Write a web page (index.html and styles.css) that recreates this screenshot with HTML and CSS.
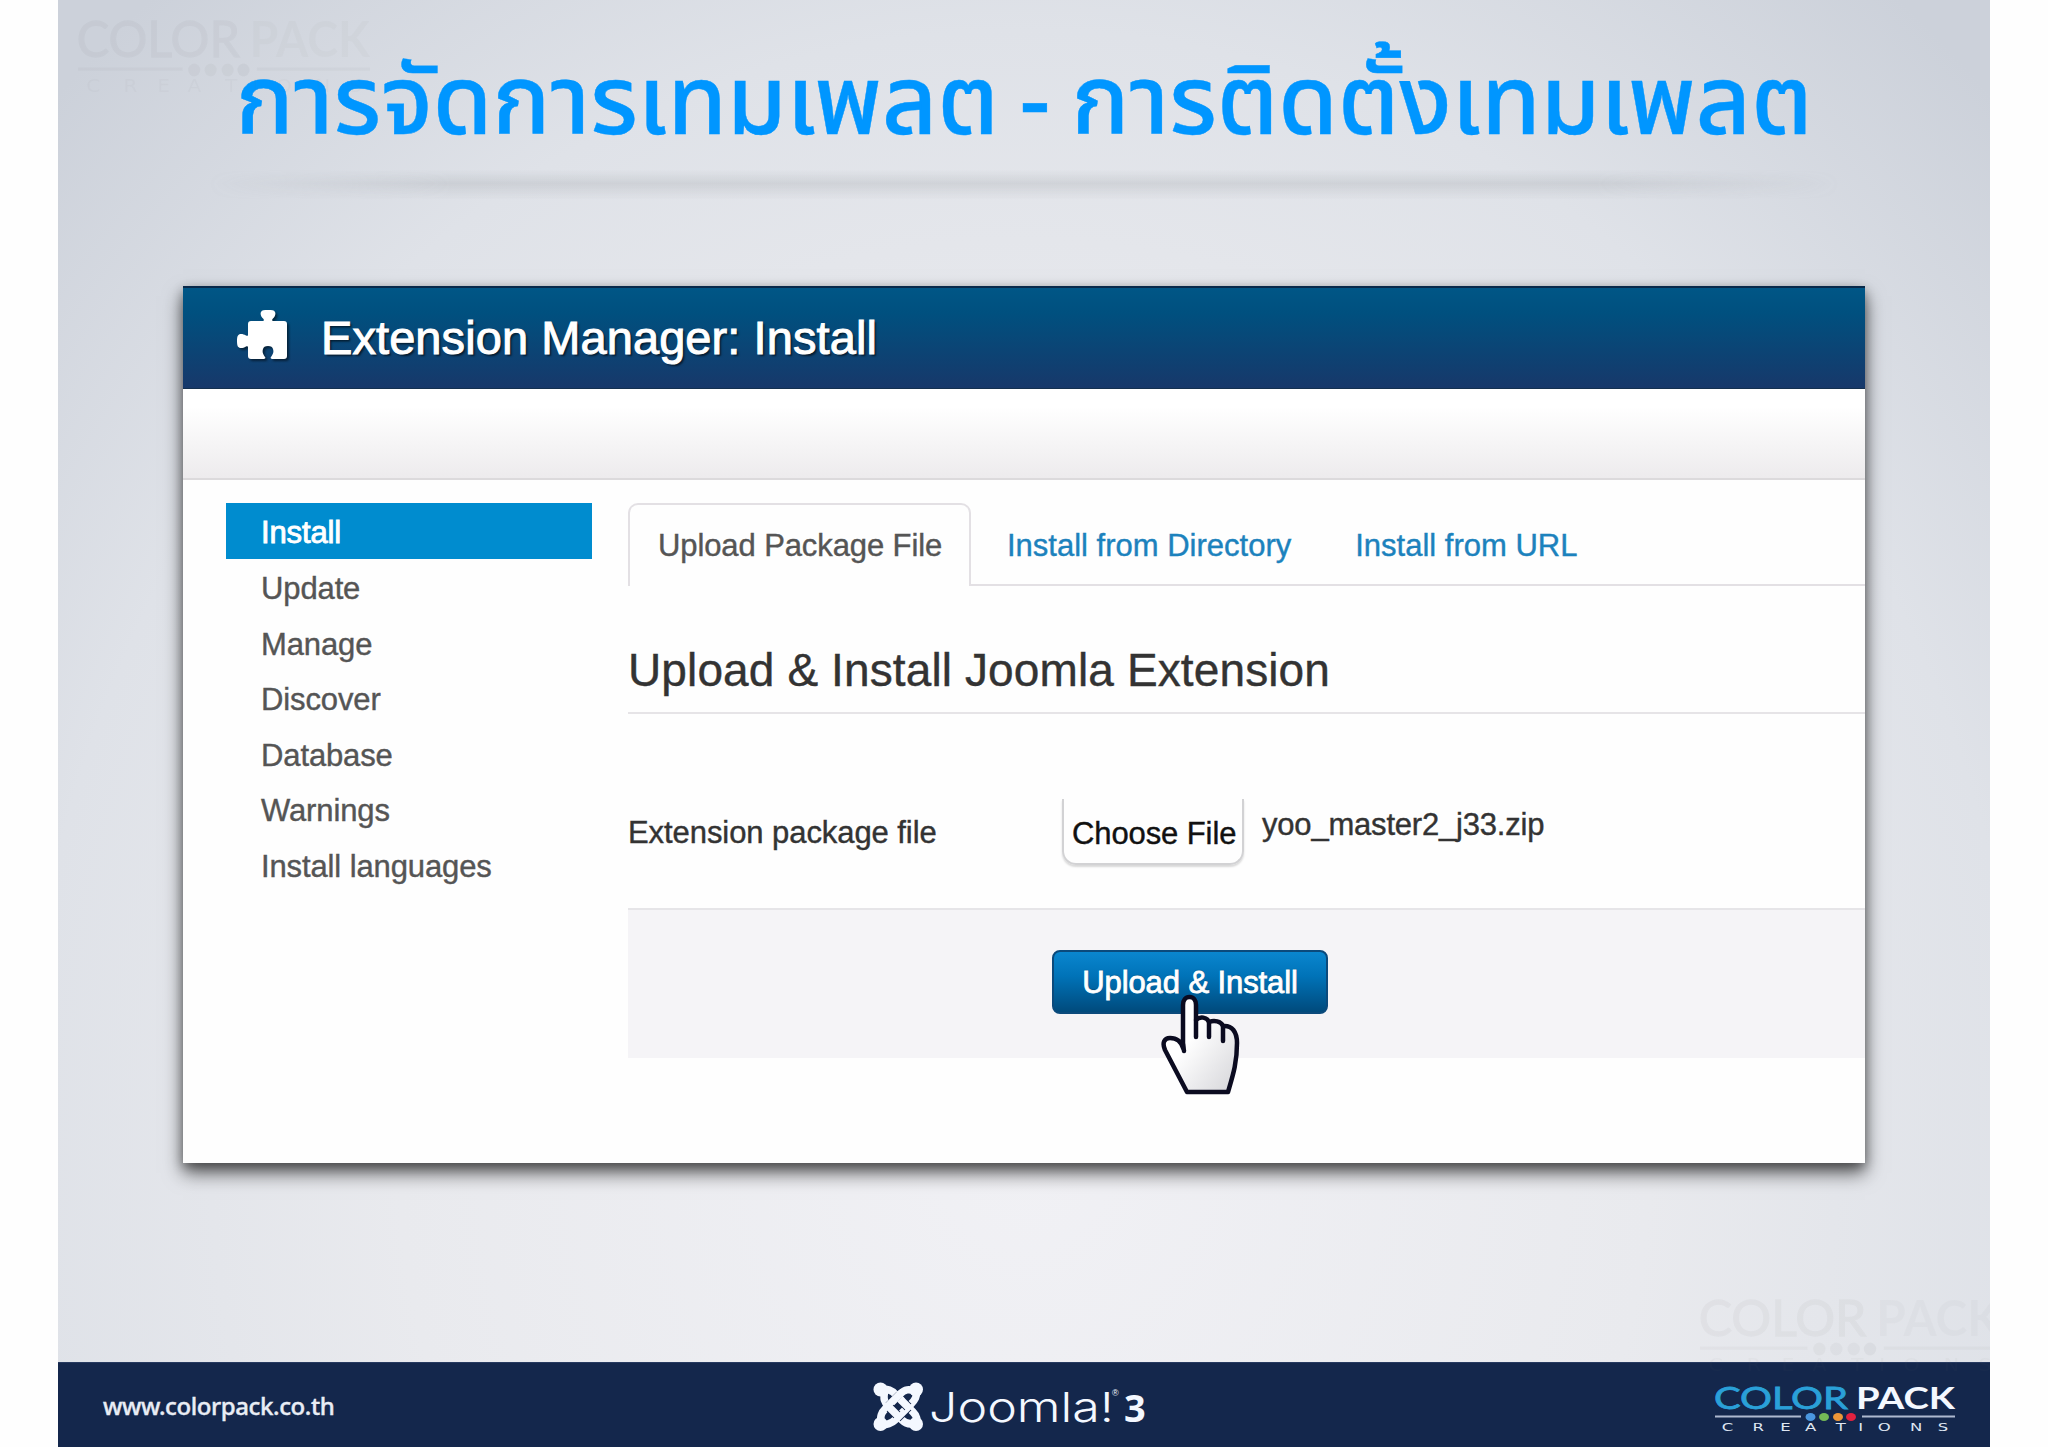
FILE: index.html
```
<!DOCTYPE html>
<html lang="th">
<head>
    <meta charset="UTF-8">
    <meta name="viewport" content="width=device-width, initial-scale=1.0">
    <title>การจัดการเทมเพลต - การติดตั้งเทมเพลต</title>
    <link rel="stylesheet" href="styles.css">
</head>
<body>
    <div class="slide">
        <svg class="watermark watermark-top" viewBox="0 0 240 50" preserveAspectRatio="none"><use href="#colorpack"/></svg>
        <svg class="watermark watermark-bottom" viewBox="0 0 240 50" preserveAspectRatio="none"><use href="#colorpack"/></svg>

        <h1 class="slide-title">การจัดการเทมเพลต - การติดตั้งเทมเพลต</h1>
        <div class="title-shadow"></div>

        <div class="window">
            <div class="header">
                <svg class="puzzle" width="50" height="49" viewBox="0 0 50 49">
                    <path fill="#fff" d="M14 11h12c1 0 1-1 .5-2C24 7 23 4 24 2c1-2 3-2 7-2s6 0 7 2c1 2 0 5-2.500 7-.5 1-.5 2 .5 2h11c2 0 3 1 3 3v32c0 2-1 3-3 3H35c-1 0-2-1-1-2 2-3 3-5 2-8-.5-2-2-3-5-3s-4.500 1-5 3c-1 3 0 5 2 8 1 1 0 2-1 2H14c-2 0-3-1-3-3V37c0-1-1-1-2-.5C7 38 6 38 4 38c-3 0-4-2-4-7s1-7 4-7c2 0 3 .5 5 1.500 1 .5 2 .5 2-.5V14c0-2 1-3 3-3z"/>
                </svg>
                <span>Extension Manager: Install</span>
            </div>
            <div class="toolbar"></div>

            <div class="content">
                <ul class="sidebar">
                    <li class="active">Install</li>
                    <li>Update</li>
                    <li>Manage</li>
                    <li>Discover</li>
                    <li>Database</li>
                    <li>Warnings</li>
                    <li>Install languages</li>
                </ul>

                <div class="main">
                    <div class="tabs">
                        <a class="tab active">Upload Package File</a>
                        <a class="tab tab-directory">Install from Directory</a>
                        <a class="tab tab-url">Install from URL</a>
                    </div>
                    <h2 class="legend">Upload &amp; Install Joomla Extension</h2>
                    <div class="control-group">
                        <label class="label">Extension package file</label>
                        <span class="choose">Choose File</span>
                        <span class="filename">yoo_master2_j33.zip</span>
                    </div>
                    <div class="actions">
                        <button class="btn">
                            <span>Upload &amp; Install</span>
                            <svg class="cursor" width="80" height="101" viewBox="0 0 80 101">
                                <defs>
                                    <linearGradient id="hand" x1="0" y1="0" x2="1" y2="1">
                                        <stop offset=".4" stop-color="#fff"/>
                                        <stop offset="1" stop-color="#d4d4d8"/>
                                    </linearGradient>
                                </defs>
                                <path fill="url(#hand)" stroke="#0b0b20" stroke-width="4.500" stroke-linejoin="round" d="M22 54V11c0-5 2.500-8 6.500-8s6.500 3 6.500 8v15c4-4 11-3 13 2 5-2 12-1 14 4 9-1 14 6 14 17 0 20-4 32-9 49H26L4 56c-3-7-1-12 5-12 7 0 11 3 13 10z"/>
                                <path fill="none" stroke="#0b0b20" stroke-width="4.500" stroke-linecap="round" d="M35 26v17M48 28v15M62 32v15M22 50l1 7"/>
                            </svg>
                        </button>
                    </div>
                </div>
            </div>
        </div>

        <div class="footer">
            <span class="site">www.colorpack.co.th</span>
            <svg class="joomla" width="276" height="52" viewBox="0 0 276 52">
                <!-- four interlaced bands, one from each corner -->
                <g fill="none" stroke="#f4f8ff" stroke-width="7.500">
                    <path d="M7 8c8 0 12 1 16 6l17 17c5 5 4 9 4 14"/>
                    <path d="M12 9c-2 9-1 12 4 17l13 13c4 4 8 5 14 3"/>
                    <path stroke="#14264b" stroke-width="9.500" d="M35 26L24 37M27 14L16 25"/>
                    <path d="M44 8c0 8-2 11-6 15L22 39c-4 4-8 5-15 5"/>
                    <path d="M8 43c-1-8 0-11 5-16l14-14c5-5 9-5 15-3"/>
                    <path stroke="#14264b" stroke-width="9.500" d="M17 27l7 7M29 20l6 6"/>
                    <path d="M15 25l10 10M27 18l10 10"/>
                </g>
                <g fill="#f4f8ff">
                    <circle cx="7.500" cy="8.500" r="7"/>
                    <circle cx="43" cy="8.500" r="7"/>
                    <circle cx="7.500" cy="43" r="7"/>
                    <circle cx="43" cy="43" r="7"/>
                    <text class="joomla-name" x="56" y="41" textLength="185" lengthAdjust="spacingAndGlyphs">Joomla!</text>
                    <text class="joomla-reg" x="239" y="15">®</text>
                    <text class="joomla-version" x="251" y="41">3</text>
                </g>
            </svg>
            <svg class="brand" viewBox="0 0 240 50">
                <g id="colorpack">
                    <text class="logo-color" x="-1" y="27" textLength="134" lengthAdjust="spacingAndGlyphs">COLOR</text>
                    <text class="logo-pack" x="141" y="27" textLength="99" lengthAdjust="spacingAndGlyphs">PACK</text>
                    <path class="logo-line" d="M0 34.5H86M147 34.5H240"/>
                    <ellipse cx="95.500" cy="35" rx="5" ry="4" fill="#4a97e0"/>
                    <ellipse cx="109" cy="35" rx="5" ry="4" fill="#74b856"/>
                    <ellipse cx="123" cy="35" rx="5" ry="4" fill="#ee9638"/>
                    <ellipse cx="136" cy="35" rx="5" ry="4" fill="#e2223f"/>
                    <text class="logo-sub" transform="scale(1.5 1)" y="49" x="4.500 25 43.500 60 80.500 95.500 108.500 130 148.500">CREATIONS</text>
                </g>
            </svg>
        </div>
    </div>
</body>
</html>
```
FILE: styles.css
```
* {
    box-sizing: border-box;
}
body {
    margin: 0;
    background-color: #fefefe;
    font-family: "Liberation Sans", Arial, sans-serif;
}
.slide {
    position: relative;
    display: flex;
    flex-direction: column;
    width: 1932px;
    height: 1447px;
    margin-left: 58px;
    overflow: hidden;
    background: radial-gradient(ellipse 1250px 1400px at 50% 1150px, #f1f1f5 0%, #e9eaee 50%, #dfe2e8 80%, #ccd1da 108%);
}
.slide-title {
    height: 170px;
    margin: 0;
    padding-top: 45px;
    text-align: center;
    color: #0096ff;
    font-family: "Noto Sans Thai", "Noto Sans", sans-serif;
    font-size: 96px;
    font-weight: 500;
    letter-spacing: -0.1px;
    line-height: 120px;
    white-space: nowrap;
    word-spacing: -4px;
    -webkit-text-stroke: 0.4px #0096ff;
}
.title-shadow {
    height: 30px;
    margin: 0 150px 86px;
    background: linear-gradient(rgba(120,125,130,0), rgba(120,125,130,0.17) 45%, rgba(120,125,130,0));
    -webkit-mask-image: linear-gradient(to right, transparent, #000 15%, #000 85%, transparent);
    mask-image: linear-gradient(to right, transparent, #000 15%, #000 85%, transparent);
}
.window {
    flex-shrink: 0;
    width: 1682px;
    height: 877px;
    margin-left: 125px;
    background-color: #fefefe;
    box-shadow: 0 10px 18px rgba(0,0,0,0.6), 0 4px 10px rgba(0,0,0,0.3);
}
.header {
    display: flex;
    align-items: center;
    height: 103px;
    padding-left: 54px;
    border-top: 2px solid #08294a;
    border-bottom: 1px solid #14304f;
    background: linear-gradient(#005686, #00507f 25%, #17386a);
    color: #fff;
    font-size: 47px;
    text-shadow: 2px 2px 2px rgba(0,0,0,0.6);
}
.header span {
    margin: 0 0 2px 34px;
    letter-spacing: 0.08px;
    -webkit-text-stroke: 1px #fff;
}
.puzzle {
    margin-bottom: 8px;
    filter: drop-shadow(2px 2px 1px rgba(0,0,0,0.5));
}
.toolbar {
    height: 91px;
    border-bottom: 2px solid #dcdadc;
    background: linear-gradient(#fff 20%, #edebed);
}
.content {
    display: flex;
    padding: 23px 0 0 43px;
    font-size: 31px;
}
.sidebar {
    width: 366px;
    margin: 0 36px 0 0;
    padding: 0;
    list-style: none;
    color: #555;
    letter-spacing: -0.12px;
    -webkit-text-stroke: 0.4px #555;
}
.sidebar li {
    height: 55.5px;
    padding-left: 35px;
    line-height: 59px;
}
.sidebar .active {
    height: 56px;
    background-color: #008ccf;
    color: #fff;
    line-height: 59px;
    -webkit-text-stroke: 0.9px #fff;
}
.main {
    flex: 1;
    color: #333;
    -webkit-text-stroke: 0.4px;
}
.tabs {
    display: flex;
    height: 83px;
    border-bottom: 2px solid #e3e0e4;
}
.tab {
    padding-left: 36px;
    line-height: 86px;
    color: #1c82bd;
    white-space: nowrap;
}
.tab.active {
    width: 343px;
    height: 83px;
    padding-left: 28px;
    border: 2px solid #e3e0e4;
    border-bottom: 0;
    border-radius: 10px 10px 0 0;
    background-color: #fefefe;
    color: #555;
    letter-spacing: -0.1px;
    line-height: 82px;
}
.tab-url {
    padding-left: 64px;
}
.legend {
    height: 128px;
    margin: 0;
    padding-top: 56px;
    border-bottom: 2px solid #e6e4e7;
    font-size: 46px;
    font-weight: normal;
    letter-spacing: 0.12px;
    line-height: 56px;
}
.control-group {
    display: flex;
    height: 194px;
    padding-top: 85px;
    line-height: 67px;
}
.label {
    width: 434px;
    letter-spacing: -0.07px;
}
.choose {
    width: 182px;
    height: 66px;
    padding-left: 8px;
    border: 2px solid #d2d2d4;
    border-top: 0;
    border-radius: 0 0 14px 14px;
    box-shadow: 0 2px 2px rgba(0,0,0,0.15);
    color: #111;
    letter-spacing: -0.1px;
    line-height: 69px;
    white-space: nowrap;
}
.filename {
    margin-left: 18px;
    letter-spacing: -0.2px;
    line-height: 51px;
}
.actions {
    height: 150px;
    padding: 40px 0 0 424px;
    border-top: 2px solid #e6e5e8;
    background-color: #f5f4f7;
}
.btn {
    position: relative;
    width: 276px;
    height: 64px;
    padding: 1px 0 0;
    border: 2px solid #0b4a7c;
    border-radius: 8px;
    background: linear-gradient(#0a86cf, #0073b8 40%, #004a7c);
    color: #fff;
    font-family: inherit;
    font-size: 31px;
    letter-spacing: -0.1px;
    -webkit-text-stroke: 0.8px #fff;
    text-shadow: 0 -1px 1px rgba(0,0,0,0.3);
}
.cursor {
    position: absolute;
    left: 107px;
    top: 42px;
}
.footer {
    display: flex;
    align-items: center;
    flex-shrink: 0;
    height: 85px;
    margin-top: auto;
    border-top: 1px solid #273a60;
    background-color: #14274c;
}
.site {
    width: 768px;
    padding-left: 45px;
    color: #e9edf5;
    font-family: "Noto Sans", sans-serif;
    font-size: 24px;
    font-weight: 500;
    letter-spacing: -0.4px;
    -webkit-text-stroke: 0.4px #e9edf5;
}
.joomla {
    margin: 3px 0 0 47px;
}
.joomla-name {
    font-family: "Inter", sans-serif;
    font-size: 41px;
    font-weight: 300;
}
.joomla-reg {
    font-size: 9px;
}
.joomla-version {
    font-family: "Noto Sans", sans-serif;
    font-size: 38px;
    font-weight: 700;
}
.brand {
    width: 240px;
    height: 50px;
    margin: 4px 0 0 566px;
    overflow: visible;
}
.logo-color, .logo-pack {
    font-family: "Lato", sans-serif;
    font-size: 31px;
}
.logo-color {
    fill: #2aa0d8;
    stroke: #2aa0d8;
    stroke-width: 0.8;
}
.logo-pack {
    fill: #f4f8ff;
    font-weight: 700;
}
.logo-line {
    stroke: #aeb9cf;
    stroke-width: 2;
}
.logo-sub {
    fill: #dfe6f2;
    font-family: "DejaVu Sans", sans-serif;
    font-size: 11px;
}
.watermark {
    position: absolute;
    width: 292px;
    height: 80px;
    opacity: 0.04;
    filter: grayscale(1) brightness(0.5);
}
.watermark-top {
    left: 20px;
    top: 14px;
}
.watermark-bottom {
    left: 1642px;
    top: 1293px;
    width: 300px;
}
```
